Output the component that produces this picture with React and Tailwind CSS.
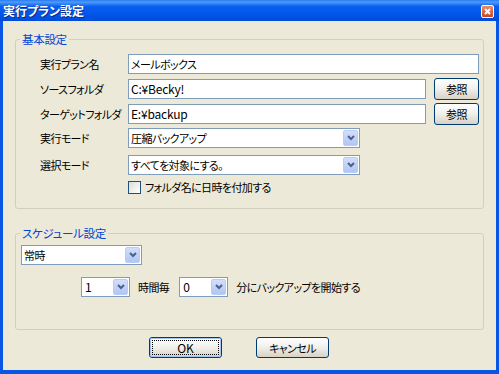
import React from "react"

// XP Luna style dialog: 実行プラン設定

function Chevron() {
  return (
    <svg width="8" height="6" viewBox="0 0 8 6">
      <polyline points="1,1 4,4 7,1" fill="none" stroke="#4D6185" strokeWidth="2" />
    </svg>
  )
}

function Combo({ value, className, latin }) {
  return (
    <div className={`flex h-[20px] items-center border border-[#7F9DB9] bg-white ${className}`}>
      <span className={`flex-1 whitespace-nowrap pl-[2px] leading-[14px] ${latin ? "pl-[3px] text-[12px] tracking-normal" : "text-[11px]"}`}>{value}</span>
      <div className="mr-[1px] flex h-[16px] w-[15px] shrink-0 items-center justify-center rounded-[2px] border border-[#BACCF6] bg-gradient-to-b from-[#D2DEFC] to-[#B1C6F5]">
        <Chevron />
      </div>
    </div>
  )
}

function TextBox({ value, className, latin }) {
  return (
    <div className={`flex h-[20px] items-center whitespace-nowrap border border-[#7F9DB9] bg-white pl-[2px] leading-[14px] ${latin ? "text-[12px] tracking-[-0.2px]" : "text-[11px]"} ${className}`}>
      {value}
    </div>
  )
}

function XPButton({ children, className, isDefault }) {
  return (
    <div
      className={`flex items-center justify-center whitespace-nowrap rounded-[3px] border border-[#003C74] bg-gradient-to-b from-white via-[#F0EFEA] to-[#D8D2C6] text-[11px] leading-[14px] ${className}`}
    >
      {isDefault ? (
        <div className="flex h-full w-full items-center justify-center rounded-[2px] border border-[#A6C2EE] p-[1px]">
          <div className="flex h-full w-full items-center justify-center border border-dotted border-black text-[12px] tracking-normal">
            {children}
          </div>
        </div>
      ) : (
        children
      )}
    </div>
  )
}

function Group({ label, className, children }) {
  return (
    <div className={`relative rounded-[3px] border border-[#D0D0BF] ${className}`}>
      <span className="absolute -top-[8px] left-[4px] whitespace-nowrap bg-[#ECE9D8] px-[2px] text-[11.5px] leading-[14px] tracking-[-0.3px] text-[#0046D5]">
        {label}
      </span>
      {children}
    </div>
  )
}

function Row({ label, className, children }) {
  return (
    <div className={`flex items-center ${className}`}>
      <span className="w-[88px] shrink-0 whitespace-nowrap text-[11px] leading-[14px]">{label}</span>
      {children}
    </div>
  )
}

export default function App() {
  return (
    <div className="flex h-[374px] w-[499px] flex-col bg-[#0A56E4] font-['Noto_Sans_CJK_JP',sans-serif] tracking-[-0.6px] text-black [font-feature-settings:'palt']">
      {/* Title bar */}
      <div className="flex h-[21px] items-start justify-between bg-[linear-gradient(to_bottom,#2a7af0_0%,#4d9cfa_10%,#0b5ff0_30%,#0055e8_70%,#004bd8_100%)] pl-[3px] pr-[5px]">
        <span className="pt-[3px] text-[12px] font-bold leading-[15px] tracking-normal text-white [text-shadow:1px_1px_#0b2a8c]">
          実行プラン設定
        </span>
        <div className="mt-[5px] flex h-[13px] w-[13px] items-center justify-center rounded-[2px] border border-white bg-gradient-to-b from-[#E98C6A] to-[#C9441F]">
          <svg width="7" height="7" viewBox="0 0 7 7">
            <path d="M1 1 L6 6 M6 1 L1 6" stroke="white" strokeWidth="2" />
          </svg>
        </div>
      </div>

      {/* Client area */}
      <div className="mx-[3px] mb-[4px] flex h-[349px] flex-col bg-[#ECE9D8] px-[12px] pt-[18px]">
        <Group label="基本設定" className="flex h-[170px] flex-col pl-[24px] pt-[14px]">
          <Row label="実行プラン名" className="h-[20px]">
            <TextBox value="メールボックス" className="w-[351px]" />
          </Row>
          <Row label="ソースフォルダ" className="mt-[4px] h-[22px]">
            <TextBox latin value="C:¥Becky!" className="w-[298px]" />
            <XPButton className="ml-[8px] h-[22px] w-[45px]">参照</XPButton>
          </Row>
          <Row label="ターゲットフォルダ" className="mt-[3px] h-[22px]">
            <TextBox latin value="E:¥backup" className="w-[298px]" />
            <XPButton className="ml-[8px] h-[22px] w-[45px]">参照</XPButton>
          </Row>
          <Row label="実行モード" className="mt-[3px] h-[20px]">
            <Combo value="圧縮バックアップ" className="w-[232px]" />
          </Row>
          <Row label="選択モード" className="mt-[7px] h-[20px]">
            <Combo value="すべてを対象にする。" className="w-[232px]" />
          </Row>
          <div className="ml-[88px] mt-[5px] flex h-[14px] items-center gap-[4px]">
            <div className="h-[13px] w-[13px] shrink-0 border border-[#1C5180] bg-gradient-to-br from-[#DCDCD7] to-white" />
            <span className="whitespace-nowrap text-[11px] leading-[14px]">フォルダ名に日時を付加する</span>
          </div>
        </Group>

        <Group label="スケジュール設定" className="mt-[24px] flex h-[97px] flex-col pl-[5px] pt-[11px]">
          <Combo value="常時" className="w-[121px]" />
          <div className="ml-[60px] mt-[12px] flex items-center">
            <Combo latin value="1" className="w-[49px]" />
            <span className="ml-[8px] whitespace-nowrap text-[11px] leading-[14px]">時間毎</span>
            <Combo latin value="0" className="ml-[10px] w-[49px]" />
            <span className="ml-[8px] whitespace-nowrap text-[11px] leading-[14px]">分にバックアップを開始する</span>
          </div>
        </Group>

        <div className="mt-[7px] flex gap-[34px] pl-[134px]">
          <XPButton isDefault className="h-[21px] w-[73px]">OK</XPButton>
          <XPButton className="h-[21px] w-[73px]">キャンセル</XPButton>
        </div>
      </div>
    </div>
  )
}
